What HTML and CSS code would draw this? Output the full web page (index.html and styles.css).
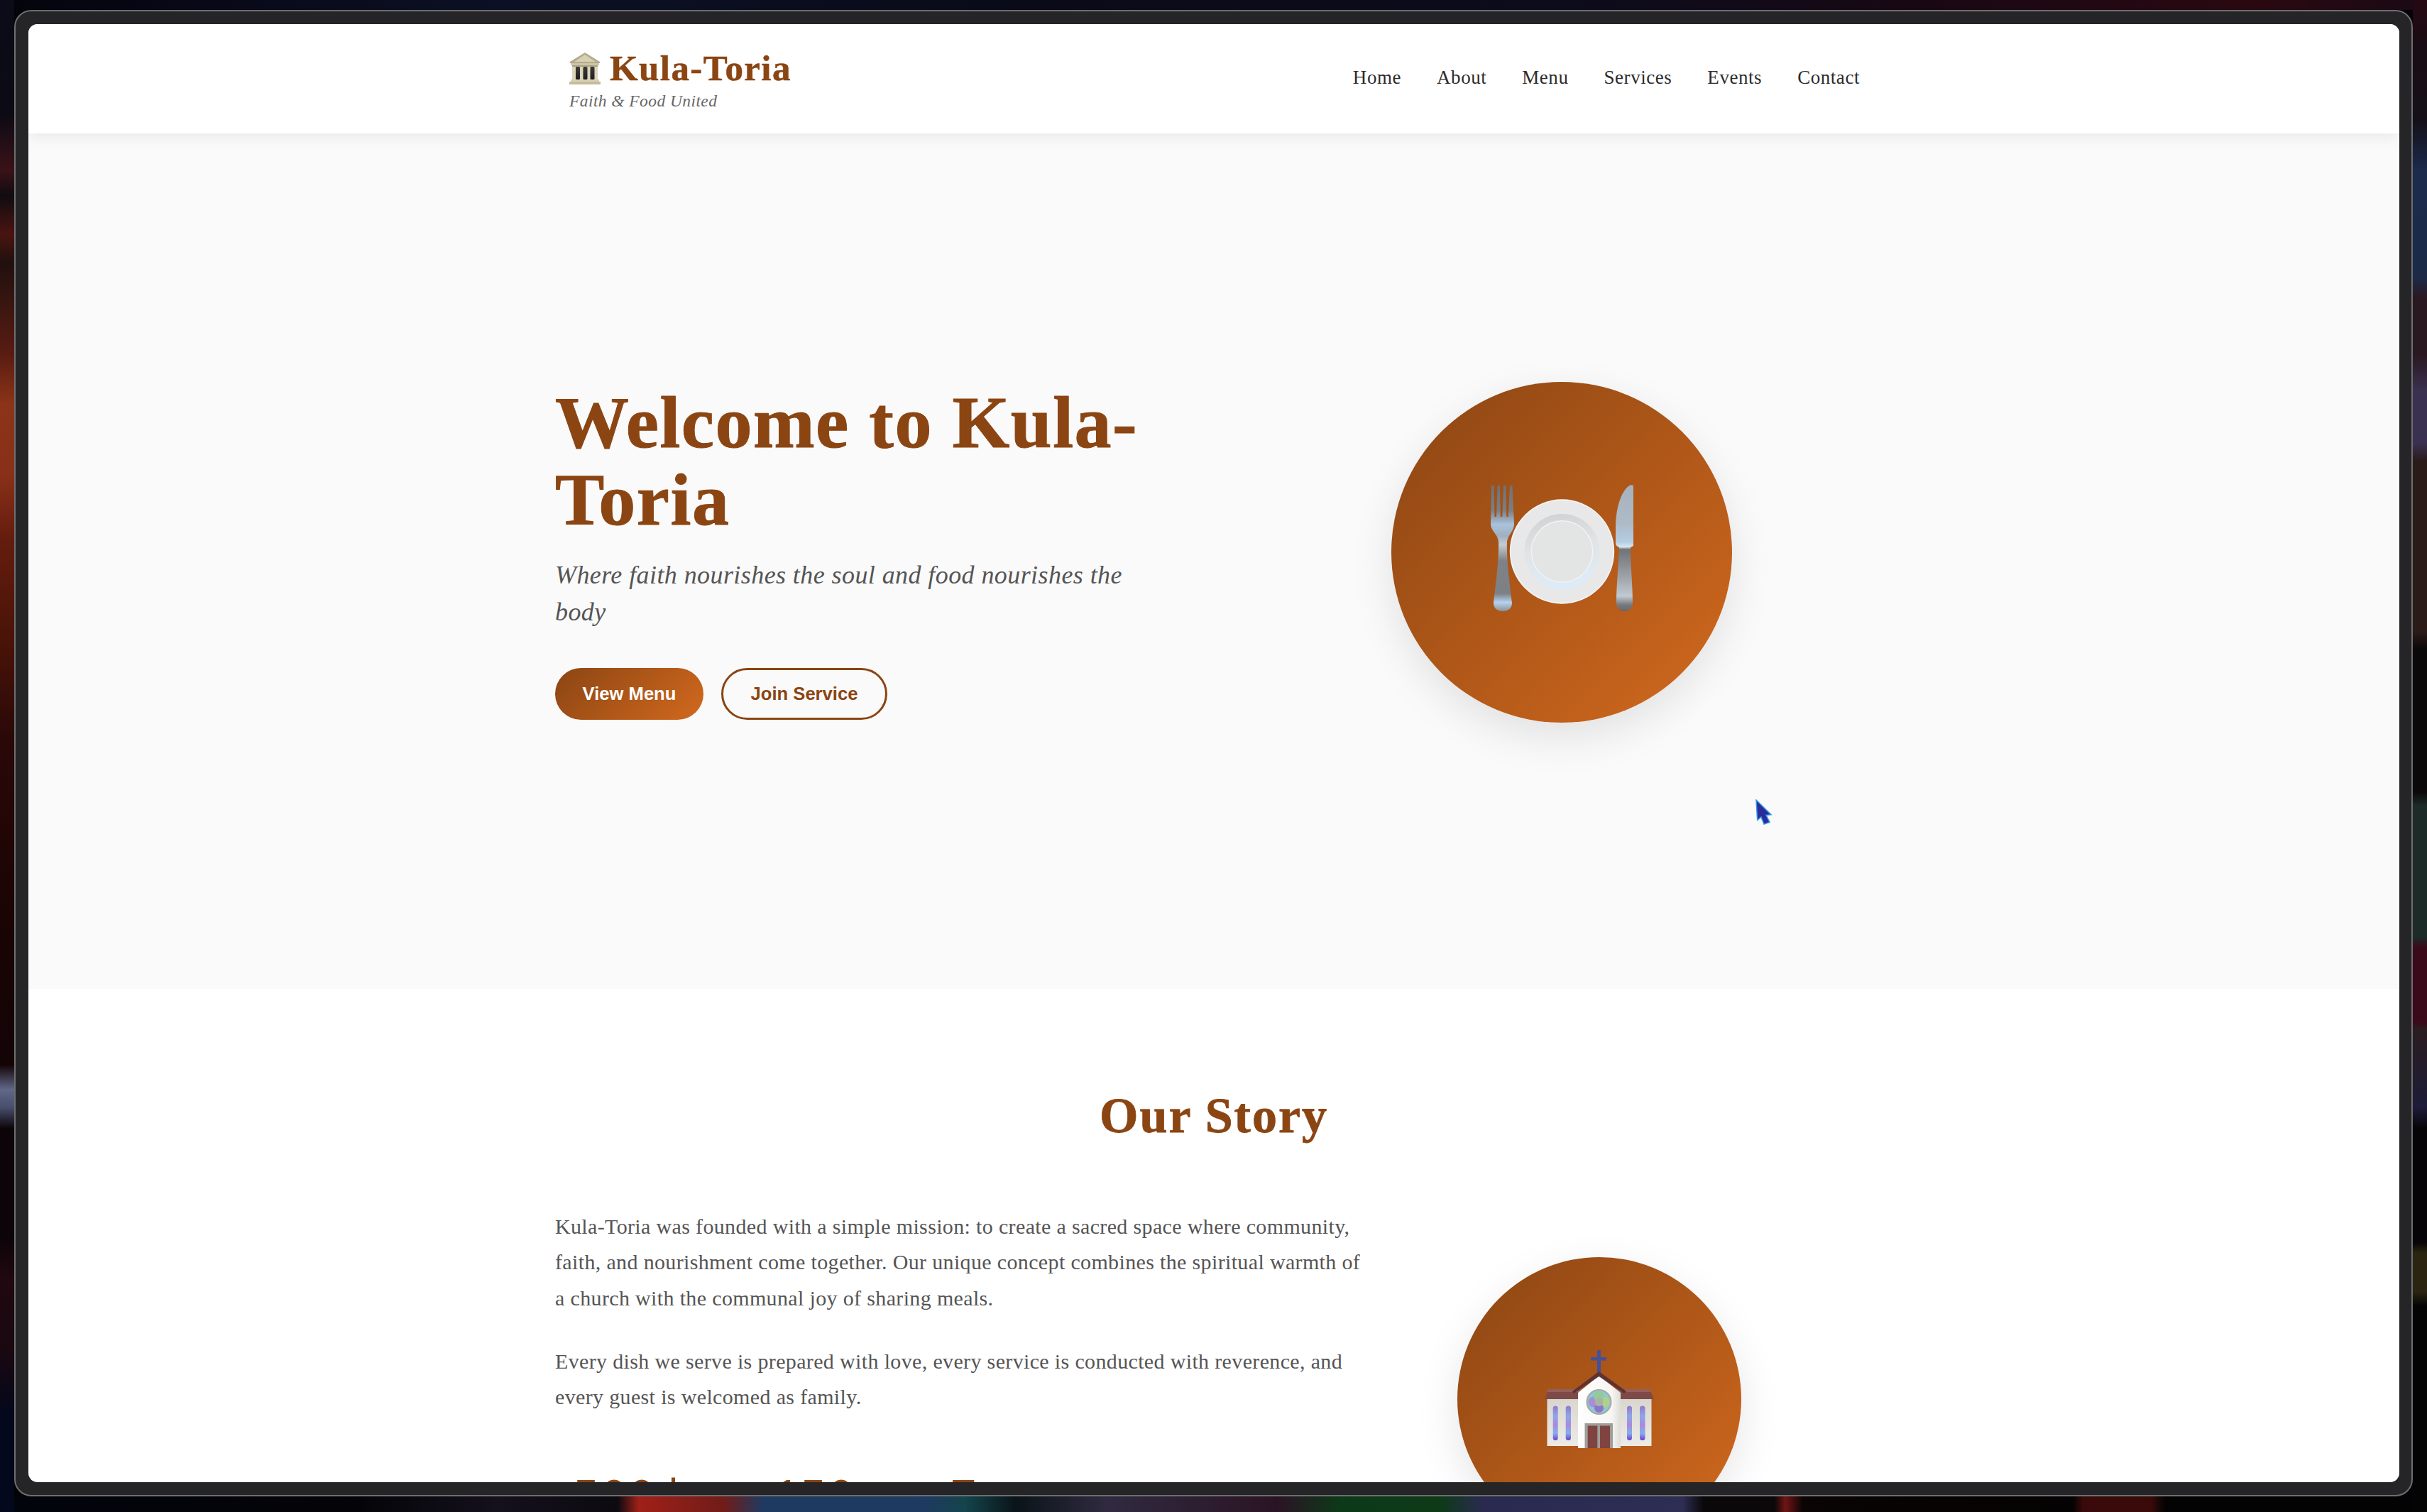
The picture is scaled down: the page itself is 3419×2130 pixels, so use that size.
FILE: index.html
```html
<!DOCTYPE html>
<html lang="en">
<head>
<meta charset="utf-8">
<title>Kula-Toria</title>
<link rel="stylesheet" href="styles.css">
</head>
<body>
<div class="window">
  <div class="page">
    <header class="nav">
      <div class="nav-inner">
        <div class="brand">
          <div class="brand-name">
            <svg class="icon-temple" viewBox="0 0 44 45" aria-hidden="true">
              <defs>
                <linearGradient id="gap" x1="0" y1="0" x2="0" y2="1">
                  <stop offset="0" stop-color="#3c3a36"/><stop offset="1" stop-color="#1f1e20"/>
                </linearGradient>
              </defs>
              <path d="M22 0 43 13v2H1v-2Z" fill="#b5ab8c"/>
              <path d="M22 3 37 13H7Z" fill="#d8d0b4"/>
              <rect x="2" y="15" width="40" height="3" fill="#cfc6a8"/>
              <rect x="4" y="18" width="36" height="21" fill="#ddd5bb"/>
              <rect x="4" y="18" width="36" height="2" fill="#a8a085"/>
              <rect x="9" y="20" width="6" height="18" rx="1.500" fill="url(#gap)"/>
              <rect x="19.500" y="20" width="6" height="18" rx="1.500" fill="url(#gap)"/>
              <rect x="29.500" y="20" width="6" height="18" rx="1.500" fill="url(#gap)"/>
              <rect x="2" y="38" width="40" height="3" fill="#d6cfb2"/>
              <rect x="0" y="41" width="44" height="4" fill="#c5bc9c"/>
            </svg>
            <span>Kula-Toria</span>
          </div>
          <div class="brand-tag">Faith &amp; Food United</div>
        </div>
        <nav class="nav-links">
          <a>Home</a><a>About</a><a>Menu</a><a>Services</a><a>Events</a><a>Contact</a>
        </nav>
      </div>
    </header>

    <section class="hero">
      <div class="hero-inner">
        <div class="hero-copy">
          <h1>Welcome to Kula-<br>Toria</h1>
          <p class="hero-sub">Where faith nourishes the soul and food nourishes the<br>body</p>
          <div class="hero-btns">
            <a class="btn btn-fill">View Menu</a>
            <a class="btn btn-line">Join Service</a>
          </div>
        </div>
        <div class="disc disc-lg">
          <svg class="icon-plate" viewBox="0 0 201 178" aria-hidden="true">
            <defs>
              <linearGradient id="fork" x1="0" y1="0" x2="0" y2="1">
                <stop offset="0" stop-color="#707276"/><stop offset=".2" stop-color="#7b7f84"/><stop offset=".31" stop-color="#a9c3dc"/><stop offset=".4" stop-color="#9fb0c0"/><stop offset=".47" stop-color="#c4ccd2"/><stop offset=".6" stop-color="#7e8286"/><stop offset=".86" stop-color="#7d8185"/><stop offset=".93" stop-color="#b5d2ee"/><stop offset="1" stop-color="#8d9298"/>
              </linearGradient>
              <linearGradient id="blade" x1="0" y1="0" x2="0" y2="1">
                <stop offset="0" stop-color="#a6b2be"/><stop offset=".3" stop-color="#aebac6"/><stop offset=".45" stop-color="#b4cde2"/><stop offset=".49" stop-color="#d8e6f0"/><stop offset=".51" stop-color="#6f7377"/><stop offset=".75" stop-color="#a4a8ac"/><stop offset=".88" stop-color="#c0cad2"/><stop offset=".95" stop-color="#77797c"/><stop offset="1" stop-color="#66686a"/>
              </linearGradient>
              <linearGradient id="ring" x1=".2" y1="0" x2=".4" y2="1">
                <stop offset="0" stop-color="#cfd1d2"/><stop offset=".5" stop-color="#e2e4e6"/><stop offset="1" stop-color="#dcecf8"/>
              </linearGradient>
            </defs>
            <path d="M1 1h3.500l1 44H8L9.500 1H13l.8 44h2.500L18 1h3.500l.8 44h2.500L27 1h3.500L33 55c0 10-8 14-10 25-1 25 5 70 7 86 0 8-5 12-13 12S4 174 4 166c2-18 8-60 7-86C10 69 0 65 0 55Z" fill="url(#fork)"/>
            <circle cx="100.500" cy="94" r="73.700" fill="#f4f4f4"/>
            <circle cx="100.500" cy="94" r="72" fill="#e8e8e8"/>
            <circle cx="100.500" cy="94" r="53" fill="url(#ring)"/>
            <circle cx="100.500" cy="94" r="44" fill="#f0f2f4"/>
            <circle cx="100.500" cy="94" r="42.500" fill="#e3e4e4"/>
            <path d="M201 1c-2-1-5-1-7 1-10 8-18 30-18 58v22c0 3 2 5 5 6-1 25-4 55-4 77 0 8 5 13 11.500 13S200 173 200 165c0-22-3-52-3-77l4-2Z" fill="url(#blade)"/>
          </svg>
        </div>
      </div>
      <svg class="cursor" viewBox="0 0 24 38" aria-hidden="true">
        <path d="M1 1 22 21.700 15 22.300 20 32.300 12 35 8 25 2.700 29.300Z" fill="#2d2a9c" stroke="#2a9be8" stroke-width="1.500"/>
      </svg>
    </section>

    <section class="story">
      <h2>Our Story</h2>
      <div class="story-grid">
        <div class="story-copy">
          <p>Kula-Toria was founded with a simple mission: to create a sacred space where community,<br>faith, and nourishment come together. Our unique concept combines the spiritual warmth of<br>a church with the communal joy of sharing meals.</p>
          <p>Every dish we serve is prepared with love, every service is conducted with reverence, and<br>every guest is welcomed as family.</p>
          <div class="stats">
            <div class="stat">500<span class="plus">+</span></div>
            <div class="stat">150</div>
            <div class="stat">7</div>
          </div>
        </div>
        <div class="disc disc-md">
          <svg class="icon-church" viewBox="0 0 154 138" aria-hidden="true">
            <defs>
              <linearGradient id="glass" x1="0" y1="0" x2="0" y2="1">
                <stop offset="0" stop-color="#8f78cf"/><stop offset=".3" stop-color="#8fa6e6"/><stop offset=".55" stop-color="#a78adf"/><stop offset=".8" stop-color="#86aeea"/><stop offset="1" stop-color="#6a3fd0"/>
              </linearGradient>
              <linearGradient id="wall" x1="0" y1="0" x2="0" y2="1">
                <stop offset="0" stop-color="#d9d6cf"/><stop offset="1" stop-color="#ecebe6"/>
              </linearGradient>
              <linearGradient id="tower" x1="0" y1="0" x2="1" y2="0">
                <stop offset="0" stop-color="#fff"/><stop offset=".8" stop-color="#f6f5f2"/><stop offset="1" stop-color="#dedcd6"/>
              </linearGradient>
            </defs>
            <rect x="74" y="0" width="5" height="33" fill="#45509a"/>
            <rect x="65" y="10" width="22" height="4.500" fill="#45509a"/>
            <rect x="3.500" y="68" width="147" height="67" fill="url(#wall)"/>
            <path d="M5 55H148L151 62 154 69H0L3 62Z" fill="#7e4a47"/>
            <path d="M5 55H148L150 59H3Z" fill="#94605c"/>
            <path d="M47 60 76.500 36 107 60V138H47Z" fill="url(#tower)"/>
            <path d="M76.500 30 39 58l2 3 35.500-24L112 61l3-3Z" fill="#5e3232"/>
            <circle cx="76.500" cy="73" r="18" fill="#a6a8a4"/>
            <circle cx="76.500" cy="73" r="16" fill="#8cc9d2"/>
            <circle cx="69" cy="73" r="7.500" fill="#a88ed4"/>
            <circle cx="84" cy="73" r="7.500" fill="#b4cf88"/>
            <circle cx="76.500" cy="65.500" r="7.500" fill="#92cb98"/>
            <circle cx="76.500" cy="81.500" r="6.500" fill="#8d74cc"/>
            <circle cx="76.500" cy="73" r="6" fill="#a7b4a4"/>
            <rect x="56.500" y="103" width="39.500" height="35" fill="#a09e9a"/>
            <rect x="60.700" y="106.500" width="13.600" height="31.500" fill="#7f4440"/>
            <rect x="78" y="106.500" width="14" height="31.500" fill="#7f4440"/>
            <rect class="pane" x="11.700" y="78.500" width="7" height="48.500" rx="3.500" fill="url(#glass)"/>
            <rect class="pane" x="29.700" y="78.500" width="7.300" height="48.500" rx="3.500" fill="url(#glass)"/>
            <rect class="pane" x="116" y="78.500" width="7" height="48.500" rx="3.500" fill="url(#glass)"/>
            <rect class="pane" x="134" y="78.500" width="7.500" height="48.500" rx="3.500" fill="url(#glass)"/>
          </svg>
        </div>
      </div>
    </section>
  </div>
</div>
</body>
</html>
```
FILE: styles.css
```css
* { box-sizing: border-box; }
html, body { margin: 0; height: 100%; }
body {
  width: 3419px;
  height: 2130px;
  overflow: hidden;
  padding: 14px 20px 22px 20px;
  background-color: #030306;
  background-repeat: no-repeat;
  background-size: 20px 2130px, 20px 2130px, 3419px 14px, 3419px 22px;
  background-position: 0 0, right 0, 0 0, 0 bottom;
  background-image:
    linear-gradient(180deg,
      #0a0c18 0, #0c0a14 160px, #3a1218 240px, #100c10 275px, #4a1410 330px, #20100e 370px,
      #5a1c12 500px, #8c3418 570px, #883018 670px, #641c0e 760px, #4a1408 900px, #2a0808 1040px,
      #1a0404 1300px, #140406 1500px, #606888 1535px, #484e6c 1560px, #0c0408 1590px,
      #0c0408 1740px, #200810 1800px, #1a0810 1900px, #04081c 1990px, #04081c 2130px),
    linear-gradient(180deg,
      #260812 0, #1a0c14 60px, #141018 170px, #1c2a4c 240px, #1c2a48 390px, #2a1820 420px,
      #2a1820 500px, #3a3050 550px, #3a3050 625px, #2a1a18 650px, #2a1a18 890px, #0a0808 915px,
      #0a0808 1115px, #1c2a28 1135px, #1c2a28 1320px, #3a0a1a 1335px, #3a0a1a 1440px, #2a1c20 1450px,
      #1c1c38 1560px, #060406 1590px, #060406 1750px, #2a2410 1765px, #2a2410 1820px, #040404 1840px),
    linear-gradient(90deg,
      #04040c 0, #080818 300px, #0c1024 700px, #0a0e20 1000px, #0a0a18 1500px, #0c0c1c 2200px,
      #180814 2700px, #2a0810 3180px, #1a0a14 3419px),
    linear-gradient(90deg,
      #02040c 0, #040408 500px, #14101c 700px, #0c0a10 870px, #a02018 900px, #701c18 1020px,
      #1e3a60 1075px, #1e3a60 1300px, #14444c 1360px, #0a1418 1430px, #302a40 1560px, #2a1424 1800px,
      #0c3a18 1890px, #0e3a18 2030px, #2a2a50 2090px, #2e2e54 2370px, #0a0808 2400px, #0a0808 2500px,
      #701414 2515px, #0a0404 2540px, #040202 2920px, #3a0a0a 2935px, #3a0a0a 3030px, #030303 3050px);
}
.window {
  width: 3379px;
  height: 2094px;
  padding: 18px;
  background: #252527;
  border: 2px solid #6e6e70;
  border-radius: 24px;
}
.page {
  width: 3340px;
  height: 2054px;
  overflow: hidden;
  background: #fff;
  border-radius: 13px;
  font-family: "Liberation Serif", serif;
}
.nav {
  height: 154px;
  background: #fff;
  box-shadow: 0 4px 20px rgba(0, 0, 0, .08);
  position: relative;
  z-index: 1;
}
.nav-inner {
  width: 1818px;
  height: 100%;
  margin-left: 762px;
  display: flex;
  justify-content: space-between;
  align-items: center;
}
.brand-name {
  display: flex;
  align-items: center;
  gap: 13px;
  font-size: 51px;
  font-weight: 700;
  letter-spacing: 1.400px;
  -webkit-text-stroke: .5px #8b4513;
  color: #8b4513;
  line-height: 60px;
}
.icon-temple { width: 44px; height: 45px; flex: none; }
.brand-tag {
  font-size: 23.500px;
  font-style: italic;
  letter-spacing: .42px;
  color: #666;
  line-height: 28px;
  margin-top: 2px;
}
.nav-links {
  display: flex;
  gap: 50px;
  padding-bottom: 3px;
  font-size: 27px;
  letter-spacing: .55px;
  color: #2c2c2c;
}
.hero {
  position: relative;
  height: 1205px;
  background: #fafafa;
}
.hero-inner {
  padding: 350px 0 0 742px;
  display: flex;
  align-items: flex-start;
}
.hero-copy { width: 1178px; padding-top: 2px; }
h1 {
  margin: 0;
  font-size: 104px;
  line-height: 109px;
  letter-spacing: 1.500px;
  font-weight: 700;
  -webkit-text-stroke: 1px #8b4513;
  color: #8b4513;
}
.hero-sub {
  margin: 25.600px 0 0;
  font-size: 36px;
  line-height: 52.500px;
  letter-spacing: .42px;
  font-style: italic;
  color: #555;
}
.hero-btns { display: flex; gap: 25px; margin-top: 52px; }
.btn {
  display: flex;
  align-items: center;
  justify-content: center;
  height: 73px;
  border-radius: 37px;
  font-family: "Liberation Sans", sans-serif;
  font-weight: 700;
  font-size: 25.600px;
}
.btn-fill { width: 209px; color: #fff; background: linear-gradient(135deg, #8b4513, #d2691e); }
.btn-line { width: 234px; color: #8b4513; border: 3px solid #8b4513; }
.disc {
  flex: none;
  border-radius: 50%;
  background: linear-gradient(135deg, #8b4513, #d2691e);
  display: flex;
  align-items: center;
  justify-content: center;
}
.disc-lg { width: 480px; height: 480px; box-shadow: 0 20px 60px rgba(0, 0, 0, .1); }
.icon-plate { width: 201px; height: 178px; margin-top: -12px; }
.cursor { position: absolute; left: 2433px; top: 938px; width: 24px; height: 38px; }
.story { padding-top: 139px; }
h2 {
  margin: 0;
  text-align: center;
  font-size: 70px;
  line-height: 80px;
  letter-spacing: 2px;
  -webkit-text-stroke: .8px #8b4513;
  color: #8b4513;
}
.story-grid { display: flex; align-items: flex-start; margin: 91px 0 0 742px; }
.story-copy { width: 1271px; }
.story-copy p {
  margin: 0 0 38.800px;
  font-size: 30px;
  line-height: 50.400px;
  letter-spacing: .35px;
  color: #555;
}
.stats {
  display: grid;
  grid-template-columns: 281px 249px 1fr;
  padding-left: 26px;
  margin-top: 74.500px;
  font-size: 72px;
  line-height: 80px;
  letter-spacing: 3px;
  font-weight: 700;
  color: #8b4513;
}
.plus { vertical-align: 10px; line-height: 0; margin-left: 3px; }
.disc-md { width: 400px; height: 400px; margin-top: 68px; box-shadow: 0 20px 60px rgba(0, 0, 0, .1); }
.icon-church { width: 154px; height: 138px; }
```
